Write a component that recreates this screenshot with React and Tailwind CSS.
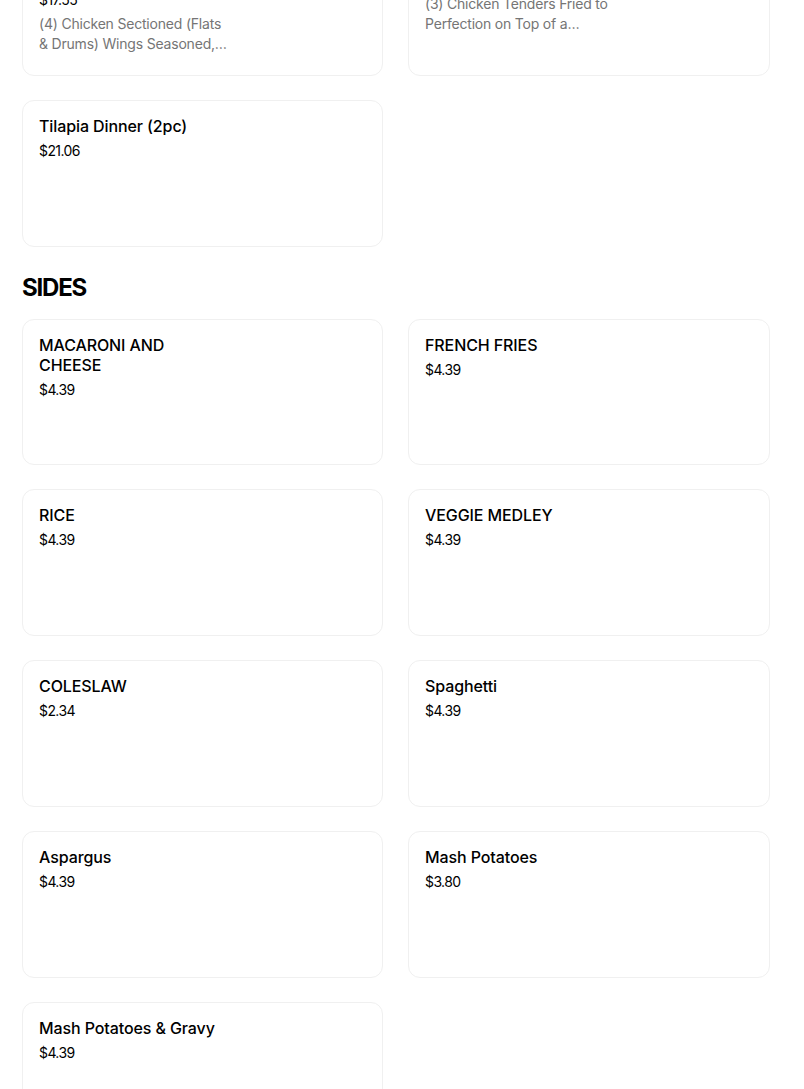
const TOP_ITEMS = [
  { name: 'Chicken Wings Dinner Platter', price: '$17.55', desc: '(4) Chicken Sectioned (Flats & Drums) Wings Seasoned, Deliciously Fried and Served' },
  { name: 'Chicken Tenders Dinner', price: '$16.38', desc: '(3) Chicken Tenders Fried to Perfection on Top of a Generous Serving of Fries' },
  { name: 'Tilapia Dinner (2pc)', price: '$21.06' },
]

const SIDES = [
  { name: 'MACARONI AND CHEESE', price: '$4.39' },
  { name: 'FRENCH FRIES', price: '$4.39' },
  { name: 'RICE', price: '$4.39' },
  { name: 'VEGGIE MEDLEY', price: '$4.39' },
  { name: 'COLESLAW', price: '$2.34' },
  { name: 'Spaghetti', price: '$4.39' },
  { name: 'Aspargus', price: '$4.39' },
  { name: 'Mash Potatoes', price: '$3.80' },
  { name: 'Mash Potatoes & Gravy', price: '$4.39' },
]

function ItemCard({ name, price, desc }) {
  return (
    <div className="h-[146.8px] rounded-xl border border-[#f0f0f0] bg-white px-4 pt-[15px]">
      <div className="w-[190px]">
        <p className="text-[16px] leading-5 font-medium tracking-[-0.1px] text-black">{name}</p>
        <p className="mt-[5px] text-[14px] leading-5 tracking-[-0.6px] text-black">{price}</p>
        {desc && (
          <p className="mt-1 text-[14px] leading-5 tracking-[-0.2px] text-[#757575] line-clamp-2">{desc}</p>
        )}
      </div>
    </div>
  )
}

export default function App() {
  return (
    <div className="w-[804px] h-[1089px] overflow-hidden bg-white" style={{ fontFamily: 'Inter, "Noto Sans", sans-serif' }}>
      <div className="mt-[-71px] pl-[22px]">
        <div className="grid grid-cols-[361px_362px] gap-x-[25px] gap-y-[24px]">
          {TOP_ITEMS.map((it) => <ItemCard key={it.name} {...it} />)}
        </div>

        {/* Sides */}
        <h2 className="mt-[25px] mb-[15px] text-[24px] leading-8 font-bold tracking-[-1.2px] text-black">SIDES</h2>
        <div className="grid grid-cols-[361px_362px] gap-x-[25px] gap-y-[24px]">
          {SIDES.map((it) => <ItemCard key={it.name} {...it} />)}
        </div>
      </div>
    </div>
  )
}
